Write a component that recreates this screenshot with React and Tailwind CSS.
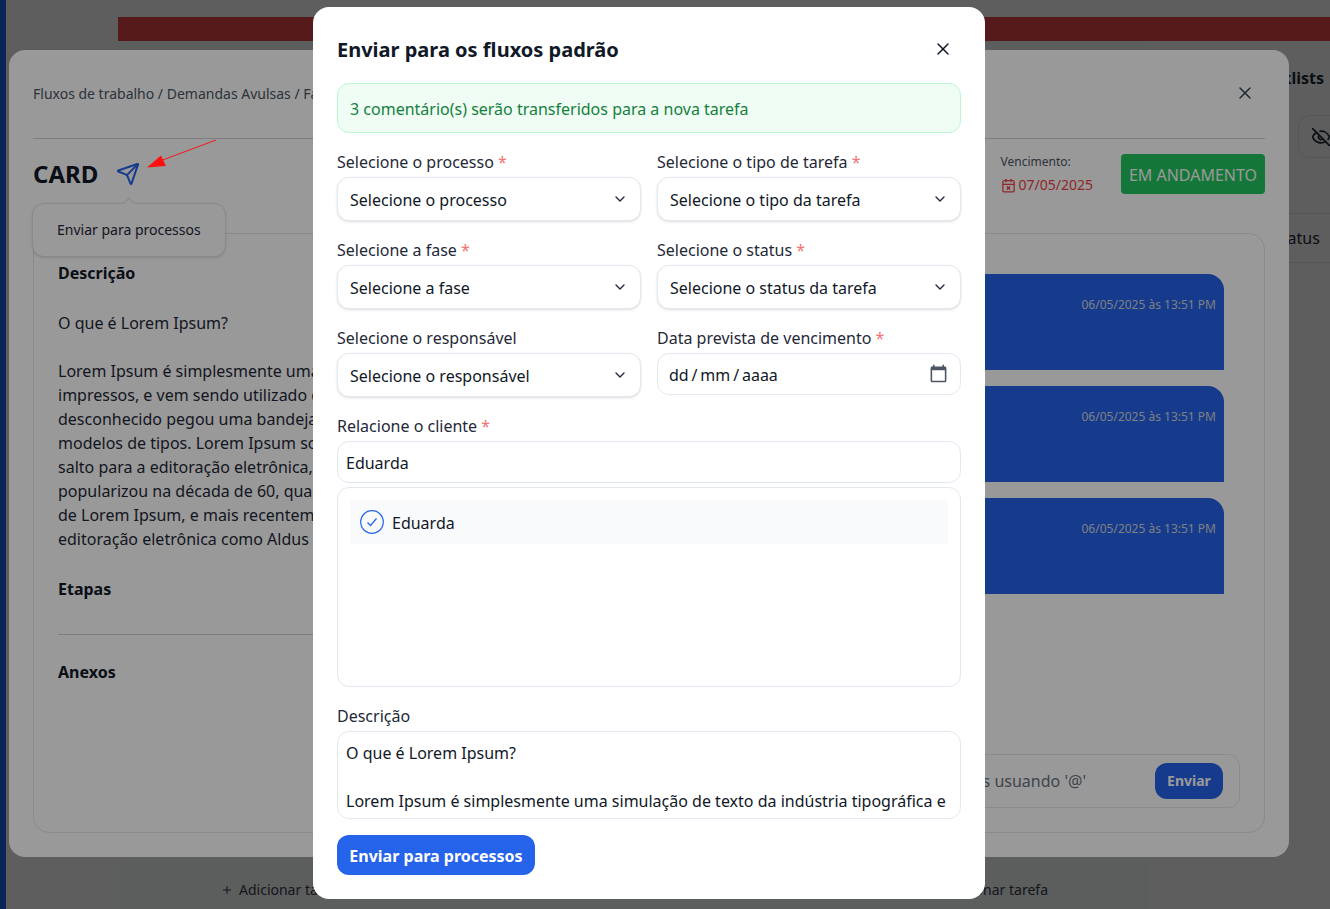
import React from "react";
import { ChevronDown, X, CalendarX, EyeOff, Plus, Send } from "lucide-react";

const Star = () => <span className="text-[#f87171]"> *</span>;

function Label({ children, req }) {
  return (
    <div className="h-6 mb-[3px] text-base leading-6 text-[#1f2937]">
      {children}
      {req && <Star />}
    </div>
  );
}

function SelectBox({ children }) {
  return (
    <div className="h-11 px-3 flex items-center justify-between rounded-xl border border-[#e2e8f0] bg-white shadow-sm text-base text-[#111827]">
      <span className="mt-[2px]">{children}</span>
      <ChevronDown size={16} strokeWidth={2} className="text-[#1f2937]" />
    </div>
  );
}

const loremLines = [
  "Lorem Ipsum é simplesmente uma simulação de texto da indústria tipográfica",
  "impressos, e vem sendo utilizado desde o século XVI, quando um impressor",
  "desconhecido pegou uma bandeja de tipos e os embaralhou para fazer um livro",
  "modelos de tipos. Lorem Ipsum sobreviveu não só a cinco séculos, como",
  "salto para a editoração eletrônica, permanecendo essencialmente inalterado.",
  "popularizou na década de 60, quando a Letraset lançou decalques contendo",
  "de Lorem Ipsum, e mais recentemente quando passou a ser integrado a softwares",
  "editoração eletrônica como Aldus PageMaker.",
];

function Message() {
  return (
    <div className="h-24 shrink-0 rounded-tr-2xl bg-[#2563eb] pt-[23px] pr-2 text-right text-xs leading-4 text-[#d1d5db]">
      06/05/2025 às 13:51 PM
    </div>
  );
}

function Background() {
  return (
    <div className="h-[909px] flex bg-white">
      <div className="w-[6px] shrink-0 bg-[#1c61ef]" />
      <div className="flex-1 min-w-0 pl-[112px] pt-[17px] flex flex-col">
        <div className="h-6 shrink-0 bg-[#e94848]" />
        <div className="flex-1 flex min-h-0">
          <div className="w-[1031px] shrink-0 bg-[#fbfcfe] flex items-end justify-between pl-[103px] pr-[101px] pb-[9px] text-sm leading-5 text-[#374151]">
            <div className="flex items-center gap-[6px]">
              <Plus size={12} />
              <span>Adicionar tarefa</span>
            </div>
            <div className="flex items-center gap-[6px]">
              <Plus size={12} />
              <span>Adicionar tarefa</span>
            </div>
          </div>
          <div className="flex-1 min-w-0 overflow-hidden">
            <div className="pl-[94px] pt-[25px] text-base leading-6 font-bold text-[#1f2937] whitespace-nowrap">Checklists</div>
            <div className="mt-[25px] ml-[149px] w-[60px] h-[43px] rounded-xl border border-[#e5e7eb] flex items-center pl-[12px] text-[#1f2937]">
              <EyeOff size={20} className="shrink-0" />
            </div>
            <div className="mt-[55px] h-[50px] border-y border-[#e5e7eb] pl-[124px] flex items-center text-base text-[#1f2937] whitespace-nowrap">Status</div>
          </div>
        </div>
      </div>
    </div>
  );
}

function CardWindow() {
  return (
    <div className="absolute left-[9px] top-[50px] w-[1280px] h-[807px] rounded-2xl bg-white px-6 flex flex-col">
      <div className="h-[89px] shrink-0 border-b border-[#d1d5db] flex items-center justify-between">
        <span className="text-sm text-[#4b5563] whitespace-nowrap">Fluxos de trabalho / Demandas Avulsas / Fase 1</span>
        <X size={20} strokeWidth={1.75} className="text-[#374151] mr-[10px] mb-[2px]" />
      </div>
      <div className="h-[94px] shrink-0 flex items-start justify-between pt-[15px]">
        <div className="flex items-center gap-[18px] h-10">
          <span className="text-2xl font-bold text-[#111827]">CARD</span>
          <Send size={24} strokeWidth={2} className="text-[#2563eb]" />
        </div>
        <div className="flex items-start gap-[28px]">
          <div>
            <div className="text-xs leading-4 text-[#4b5563]">Vencimento:</div>
            <div className="mt-[5px] flex items-center gap-[3px] text-sm leading-5 text-[#ef4444]">
              <CalendarX size={15} strokeWidth={2} />
              <span>07/05/2025</span>
            </div>
          </div>
          <div className="w-[144px] h-10 pt-[2px] rounded bg-[#22c55e] text-white text-base flex items-center justify-center">EM ANDAMENTO</div>
        </div>
      </div>
      <div className="h-[600px] shrink-0 rounded-2xl border border-[#e5e7eb] flex">
        <div className="w-[600px] shrink-0 pl-6 pt-[27px] overflow-hidden text-base leading-6 text-[#1f2937]">
          <div className="font-bold text-[#111827]">Descrição</div>
          <div className="mt-[26px]">O que é Lorem Ipsum?</div>
          <div className="mt-6 whitespace-nowrap">
            {loremLines.map((l) => (
              <div key={l}>{l}</div>
            ))}
          </div>
          <div className="mt-[26px] font-bold text-[#111827]">Etapas</div>
          <div className="mt-[33px] border-t border-[#d1d5db]" />
          <div className="mt-[25px] font-bold text-[#111827]">Anexos</div>
        </div>
        <div className="flex-1 min-w-0 pt-10 pb-6 pr-6 pl-6 flex flex-col justify-between">
          <div className="mr-4 flex flex-col gap-4">
            <Message />
            <Message />
            <Message />
          </div>
          <div className="h-[54px] rounded-xl border border-[#e5e7eb] flex items-center justify-end pr-4 gap-[69px]">
            <span className="text-base text-[#6b7280] whitespace-nowrap">Mencione usuários usuando '@'</span>
            <div className="w-[68px] h-9 rounded-xl bg-[#2563eb] text-white text-sm font-bold flex items-center justify-center">Enviar</div>
          </div>
        </div>
      </div>
      <div className="absolute left-[23px] top-[153px] w-[194px] h-[54px] rounded-xl border border-[#e5e7eb] bg-white shadow-sm flex items-center pl-6 text-sm text-[#1f2937]">
        Enviar para processos
        <span className="absolute left-[92px] -top-[5px] w-2 h-2 rotate-45 bg-white border-l border-t border-[#e5e7eb]" />
      </div>
    </div>
  );
}

function Modal() {
  return (
    <div className="absolute left-[313px] top-[7px] w-[672px] h-[892px] rounded-2xl bg-white p-6 flex flex-col">
      <div className="h-[36px] mt-[1px] shrink-0 flex items-center justify-between">
        <h2 className="text-xl font-bold text-[#111827]">Enviar para os fluxos padrão</h2>
        <X size={20} strokeWidth={1.75} className="text-[#111827] mr-[8px] mb-[2px]" />
      </div>
      <div className="mt-[15px] h-[50px] shrink-0 rounded-xl border border-[#bbf7d0] bg-[#f0fdf4] px-3 pt-[2px] flex items-center text-base text-[#15803d]">
        3 comentário(s) serão transferidos para a nova tarefa
      </div>
      <div className="mt-[17px] grid grid-cols-2 gap-x-4 gap-y-[17px]">
        <div>
          <Label req>Selecione o processo</Label>
          <SelectBox>Selecione o processo</SelectBox>
        </div>
        <div>
          <Label req>Selecione o tipo de tarefa</Label>
          <SelectBox>Selecione o tipo da tarefa</SelectBox>
        </div>
        <div>
          <Label req>Selecione a fase</Label>
          <SelectBox>Selecione a fase</SelectBox>
        </div>
        <div>
          <Label req>Selecione o status</Label>
          <SelectBox>Selecione o status da tarefa</SelectBox>
        </div>
        <div>
          <Label>Selecione o responsável</Label>
          <SelectBox>Selecione o responsável</SelectBox>
        </div>
        <div>
          <Label req>Data prevista de vencimento</Label>
          <div className="h-[42px] pl-[11px] pr-[12px] flex items-center justify-between rounded-xl border border-[#e2e8f0] bg-white text-base text-[#111827]">
            <span className="mt-[2px] [word-spacing:-1.3px]">dd / mm / aaaa</span>
            <svg viewBox="0 0 24 24" width="19" height="19" fill="currentColor" className="text-[#4b5563] mb-[1px]">
              <path d="M20 3h-1V1h-2v2H7V1H5v2H4c-1.1 0-2 .9-2 2v16c0 1.1.9 2 2 2h16c1.1 0 2-.9 2-2V5c0-1.1-.9-2-2-2zm0 18H4V8h16v13z" />
            </svg>
          </div>
        </div>
      </div>
      <div className="mt-[17px]">
        <Label req>Relacione o cliente</Label>
        <input
          readOnly
          value="Eduarda"
          className="w-full h-[42px] px-2 pt-[2px] rounded-xl border border-[#e2e8f0] bg-white text-base text-[#111827] outline-none"
        />
      </div>
      <div className="mt-1 h-[200px] shrink-0 rounded-xl border border-[#e2e8f0] bg-white p-3">
        <div className="h-11 bg-[#f9fafb] flex items-center gap-[8px] pl-[10px]">
          <svg viewBox="0 0 24 24" width="24" height="24" fill="none" className="text-[#2563eb] shrink-0" stroke="currentColor" strokeWidth="1.2">
            <circle cx="12" cy="12" r="11.3" />
            <path d="M7.5 12.5l3 3 6-7" />
          </svg>
          <span className="mt-[2px] text-base text-[#111827]">Eduarda</span>
        </div>
      </div>
      <div className="mt-[17px]">
        <Label>Descrição</Label>
        <textarea
          readOnly
          defaultValue={"O que é Lorem Ipsum?\n\nLorem Ipsum é simplesmente uma simulação de texto da indústria tipográfica e de impressos, e vem sendo utilizado desde o século XVI."}
          className="block w-full h-[88px] px-2 py-[9px] rounded-xl border border-[#e2e8f0] bg-white text-base leading-6 text-[#111827] outline-none resize-none overflow-hidden"
        />
      </div>
      <button className="mt-4 w-[198px] h-10 pt-[2px] rounded-xl bg-[#2563eb] text-white text-base font-bold">Enviar para processos</button>
    </div>
  );
}

export default function App() {
  return (
    <div className="relative w-[1330px] h-[909px] overflow-hidden font-['Noto_Sans',sans-serif]">
      <Background />
      <div className="absolute inset-0 bg-[rgba(0,0,0,0.386)]" />
      <CardWindow />
      <div className="absolute inset-0 bg-black/40" />
      <Modal />
      <svg className="absolute left-[140px] top-[135px]" width="80" height="40" viewBox="140 135 80 40" fill="none">
        <line x1="216" y1="140" x2="160" y2="161" stroke="#f01a1a" strokeWidth="1" />
        <polygon points="147,167.5 161,155.5 166,166" fill="#ff0f0f" />
      </svg>
    </div>
  );
}
